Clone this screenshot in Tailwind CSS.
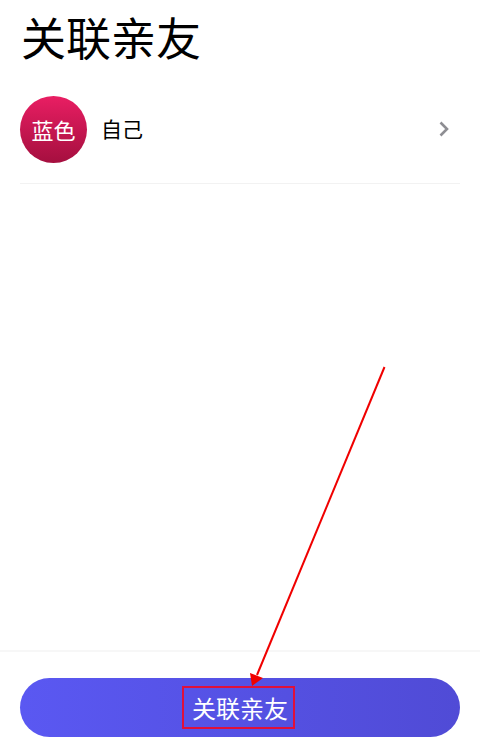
<!DOCTYPE html>
<html lang="zh-CN">
<head>
  <meta charset="UTF-8">
  <title>关联亲友</title>
  <script src="https://cdn.jsdelivr.net/npm/@tailwindcss/browser@4"></script>
</head>
<body class="bg-white font-['Noto_Sans_CJK_SC',sans-serif]">
  <div class="relative w-[480px] h-[756px] overflow-hidden flex flex-col">
    <!-- 标题 -->
    <h1 class="pl-[21px] pt-[5px] h-[96px] text-[45px] leading-[64px] font-normal text-black">关联亲友</h1>

    <!-- 亲友列表 -->
    <div class="mx-[20px] h-[88px] flex items-start border-b border-[#f2f2f2]">
      <div class="w-[67px] h-[67px] rounded-full bg-gradient-to-b from-[#e91e63] to-[#a50f3f] flex items-center justify-center text-white text-[22px]">蓝色</div>
      <span class="ml-[14px] mt-[18px] text-[21px] leading-[28px] text-black">自己</span>
      <svg class="ml-auto mr-[11px] mt-[25px]" width="10" height="16" viewBox="0 0 10 16" fill="none">
        <path d="M1.5 1.5 L8 8 L1.5 14.5" stroke="#8e8e93" stroke-width="2.6"/>
      </svg>
    </div>

    <!-- 底部按钮 -->
    <div class="mt-auto h-[106px] border-t-2 border-[#f7f7f7] pt-[26px] px-[20px]">
      <div class="h-[59px] rounded-full bg-gradient-to-r from-[#5a58f2] to-[#504bd6] flex items-center justify-center">
        <span class="w-[113px] h-[43px] mr-[3px] pl-[3px] border-2 border-[#e0103a] flex items-center justify-center text-white text-[24px]">关联亲友</span>
      </div>
    </div>

    <!-- 标注箭头 -->
    <svg class="absolute left-0 top-0 pointer-events-none" width="480" height="756" viewBox="0 0 480 756" fill="none">
      <line x1="384.5" y1="367" x2="257" y2="675" stroke="#f00000" stroke-width="2"/>
      <polygon points="252,686 250,673 263,678" fill="#f00000"/>
    </svg>
  </div>
</body>
</html>
